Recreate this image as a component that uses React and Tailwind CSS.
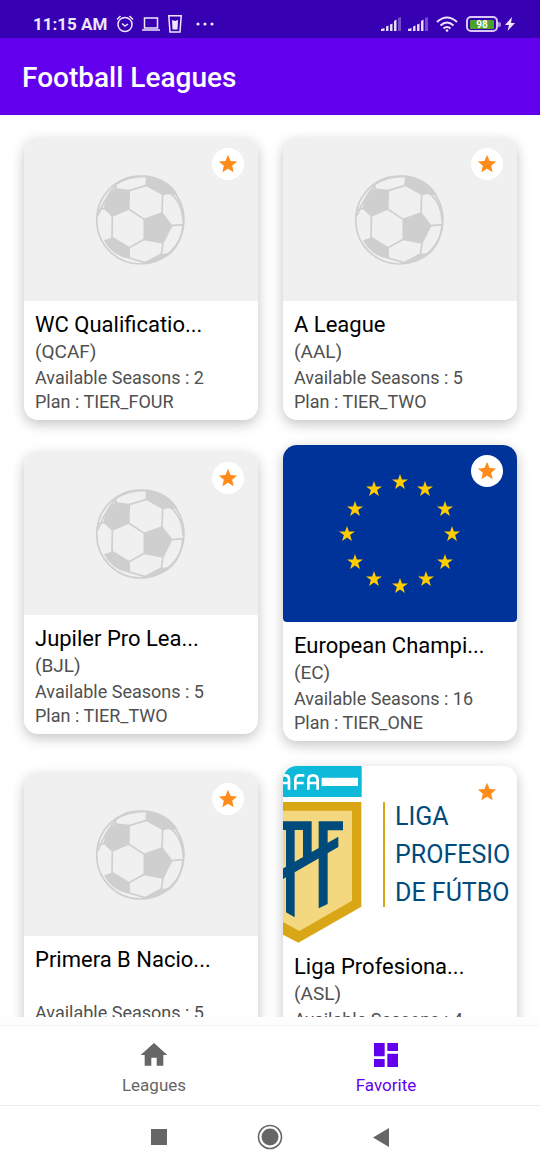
const STAR = "M12 17.27 18.18 21l-1.64-7.03L22 9.24l-7.19-.61L12 2 9.19 8.63 2 9.24l5.46 4.73L5.82 21z";

function Ball() {
  return (
    <svg viewBox="258 149 270 270" className="size-[90px]" fill="none" stroke="#cfcfcf" strokeWidth="5" strokeLinejoin="round" aria-hidden="true">
      <ellipse cx="391" cy="284" rx="131" ry="132" />
      <g fill="#cfcfcf">
        <path d="M318 191 358 196 356 251 307 272 283 249Q288 215 318 191Z" />
        <path d="M403 282 456 263 485 301 459 353 403 342Z" />
        <path d="M410 153Q470 160 500 207Q478 202 458 207L409 180Z" />
        <path d="M285 346 309 338 357 367 358 398Q310 390 285 346Z" />
        <path d="M405 412 453 387Q470 390 484 381Q450 410 405 412Z" />
      </g>
      <path d="M358 196 409 180M458 207 456 263M403 282 356 251M307 272 306 338M357 367 403 342M459 353 454 387M485 301 520 298M480 203Q518 232 519 290M283 249 262 254M318 191 317 178Q350 153 410 153M264 270Q286 215 317 180M358 398 405 412M519 298Q515 350 484 381" />
    </svg>
  );
}

function Placeholder() {
  return (
    <div className="flex h-[163px] items-center justify-center bg-[#f0f0f0]">
      <Ball />
    </div>
  );
}

const EU_STARS = [[400, 482], [425, 489], [445, 509], [452, 534], [445, 562], [426, 579], [400, 586], [374, 579], [355, 562], [347, 534], [355, 509], [374, 489]];

function EuropeFlag() {
  return (
    <svg viewBox="283 445 234 177" className="block w-full rounded-b-[4px] bg-[#003399]" fill="#ffcc00" role="img" aria-label="European flag">
      {EU_STARS.map(([x, y]) => (
        <path key={`${x}-${y}`} transform={`translate(${x} ${y})`} d="M0-8 1.9-2.5H8L3.1 1.1 4.9 7 0 3.4-4.9 7-3.1 1.1-8-2.5H-1.9Z" />
      ))}
    </svg>
  );
}

function LigaShield() {
  return (
    <svg viewBox="24 33 702 531" className="block w-full" role="img" aria-label="Liga Profesional shield">
      <path fill="#0cb9d9" d="M22 33h238v93H22z" />
      <path fill="#fff" d="M140 68h109v25H140z" />
      <path fill="none" stroke="#fff" strokeWidth="8" d="M22 61h8q12 0 12 12v31M22 84h20M61 104V74q0-13 13-13h14M61 84h25M100 104V76q0-15 14-15t14 15v28M100 84h28" />
      <path fill="#d9a616" d="M22 141h237v314L70 563 22 538z" />
      <path fill="#f3d880" d="M22 167h209v270L73 528 22 500z" />
      <path fill="#004b7c" d="M22 199h88v26H22zM33 199h26v288l-26-15zM84 199h26v105l-26 12zM131 199h27v248l-27 13zM131 199h73v27h-73zM22 342l168-97v31L22 373z" />
      <path fill="#d9a616" d="M324 141h6v315h-6z" />
    </svg>
  );
}

function LigaArtwork() {
  return (
    <div className="relative overflow-hidden bg-white">
      <LigaShield />
      <p className="absolute top-8 left-[112px] text-[25px] leading-[38px] whitespace-nowrap text-[#004b7c]">
        LIGA<br />PROFESIO<br />DE FÚTBO
      </p>
    </div>
  );
}

const LEAGUES = [
  { name: "WC Qualificatio...", code: "(QCAF)", seasons: 2, plan: "TIER_FOUR", Art: Placeholder },
  { name: "A League", code: "(AAL)", seasons: 5, plan: "TIER_TWO", Art: Placeholder },
  { name: "Jupiler Pro Lea...", code: "(BJL)", seasons: 5, plan: "TIER_TWO", Art: Placeholder },
  { name: "European Champi...", code: "(EC)", seasons: 16, plan: "TIER_ONE", Art: EuropeFlag },
  { name: "Primera B Nacio...", code: "", seasons: 5, plan: "TIER_FOUR", Art: Placeholder },
  { name: "Liga Profesiona...", code: "(ASL)", seasons: 4, plan: "TIER_FOUR", Art: LigaArtwork },
];

function LeagueCard({ league }) {
  const { name, code, seasons, plan, Art } = league;
  return (
    <article className="relative overflow-hidden rounded-[14px] bg-white shadow-[0_4px_13px_rgba(0,0,0,0.24)]">
      <Art />
      <button type="button" aria-label={`Remove ${name} from favorites`} className="absolute top-[10px] right-[14px] flex size-8 items-center justify-center rounded-full bg-white">
        <svg viewBox="0 0 24 24" className="size-[22px]" fill="#ff8c1a" aria-hidden="true"><path d={STAR} /></svg>
      </button>
      <div className="px-[11px] pt-[10px] pb-[6px] text-[18px] leading-6 text-[#505050]">
        <h2 className="truncate text-[22px] leading-[27px] text-black">{name}</h2>
        <p className="h-7 text-[19px] leading-7">{code}</p>
        <p>Available Seasons : {seasons}</p>
        <p>Plan : {plan}</p>
      </div>
    </article>
  );
}

function Signal() {
  return (
    <svg viewBox="0 0 20 14" className="h-[14px] w-5" fill="#e6dcf8" aria-hidden="true">
      <path d="M0 14v-2l3.500-1v3zM5 9.500l2.500-1V14H5zM9 7.500l2.500-1V14H9zM13 4l2.500-1.500V14H13z" />
      <path opacity=".35" d="m17 1 3-1v14h-3z" />
    </svg>
  );
}

export default function App() {
  return (
    <div className="flex h-screen flex-col overflow-hidden bg-white font-[Roboto,sans-serif]">
      <div className="flex h-[38px] shrink-0 items-center bg-[#3700b3] pt-[10px] pr-[25px] pl-[33px] text-[#eee6fb]">
        <span className="text-[17px] leading-5 font-bold">11:15 AM</span>
        <svg viewBox="0 0 18 18" className="ml-[9px] size-[18px]" fill="none" stroke="currentColor" strokeWidth="1.500" aria-hidden="true">
          <circle cx="9" cy="9.500" r="7" /><path d="M1 4.500 4.500 1M17 4.500 13.500 1M6 8.500l3 2.500 3-2" />
        </svg>
        <svg viewBox="0 0 18 16" className="ml-2 h-4 w-[18px]" fill="none" stroke="currentColor" strokeWidth="1.500" aria-hidden="true">
          <path d="M2.500 2h13v10h-13zM0 14h18" />
        </svg>
        <svg viewBox="0 0 14 18" className="ml-2 h-[18px] w-[14px]" fill="none" stroke="currentColor" strokeWidth="1.500" aria-hidden="true">
          <path d="M.8.8h12.400L12 17H2z" /><path fill="currentColor" stroke="none" d="M4 5l3 1 3-1-.5 9.500h-5z" />
        </svg>
        <svg viewBox="0 0 18 4" className="ml-[14px] h-1 w-[18px]" fill="currentColor" aria-hidden="true">
          <circle cx="2" cy="2" r="1.600" /><circle cx="9" cy="2" r="1.600" /><circle cx="16" cy="2" r="1.600" />
        </svg>
        <div className="ml-auto flex items-center">
          <Signal />
          <span className="w-[7px]" />
          <Signal />
          <svg viewBox="0 0 22 16" className="ml-2 h-4 w-[22px]" fill="none" stroke="currentColor" strokeWidth="2" aria-hidden="true">
            <path d="M1 6q10-9 20 0M4.500 9.500q6.500-6 13 0M7.500 12.500q3.500-3 7 0" /><circle cx="11" cy="14.500" r="1.300" fill="currentColor" stroke="none" />
          </svg>
          <div className="ml-2 flex h-4 w-8 items-center justify-center rounded-[5px] border-2 border-[#d9c8f5] px-[2px]">
            <span className="w-full rounded-[1px] bg-[#4c9f2b] text-center text-[10px] leading-[9px] font-bold text-white">98</span>
          </div>
          <span className="h-[5px] w-[3px] rounded-r-[2px] bg-current opacity-60" />
          <svg viewBox="0 0 10 14" className="ml-1 h-[14px] w-[10px]" fill="currentColor" aria-hidden="true"><path d="M7 0 0 8h4l-1.500 6L10 6H6z" /></svg>
        </div>
      </div>

      <header className="flex h-[77px] shrink-0 items-center bg-[#6200ee] px-[22px] pt-[2px] text-white">
        <h1 className="text-[28px] leading-8 font-medium">Football Leagues</h1>
      </header>

      <main className="min-h-0 flex-1 overflow-y-auto [scrollbar-width:none]">
        <div className="grid grid-cols-2 items-center gap-[25px] pt-[23px] pr-[23px] pb-6 pl-6">
          {LEAGUES.map((league) => <LeagueCard key={league.name} league={league} />)}
        </div>
      </main>

      <nav className="shrink-0 border-b border-[#ececec] bg-[#fdfdfd] pt-2">
        <div className="flex border-t border-[#f5f5f5] bg-white px-[38px]">
          <a href="#leagues" className="flex h-[79px] flex-1 flex-col items-center pt-[13px] text-[#666]">
            <svg viewBox="0 0 24 24" className="size-8" fill="currentColor" aria-hidden="true"><path d="M10 20v-6h4v6h5v-8h3L12 3 2 12h3v8z" /></svg>
            <span className="mt-1 text-[17px] leading-5">Leagues</span>
          </a>
          <a href="#favorite" aria-current="page" className="flex h-[79px] flex-1 flex-col items-center pt-[13px] text-[#6200ee]">
            <svg viewBox="0 0 24 24" className="size-8" fill="currentColor" aria-hidden="true"><path d="M3 13h8V3H3zm0 8h8v-6H3zm10 0h8V11h-8zm0-18v6h8V3z" /></svg>
            <span className="mt-1 text-[17px] leading-5">Favorite</span>
          </a>
        </div>
      </nav>

      <div className="flex h-16 shrink-0 items-center justify-center gap-[86px] bg-white pb-[2px] text-[#666]">
        <button type="button" aria-label="Recent apps"><svg viewBox="0 0 24 24" className="size-6" fill="currentColor"><path d="M4 4h16v16H4z" /></svg></button>
        <button type="button" aria-label="Home"><svg viewBox="0 0 26 26" className="size-[26px]" fill="currentColor"><circle cx="13" cy="13" r="8.500" /><circle cx="13" cy="13" r="11.500" fill="none" stroke="currentColor" strokeWidth="1.600" /></svg></button>
        <button type="button" aria-label="Back"><svg viewBox="0 0 24 24" className="size-6" fill="currentColor"><path d="M4 12.500 20 3v19z" /></svg></button>
      </div>
    </div>
  );
}
